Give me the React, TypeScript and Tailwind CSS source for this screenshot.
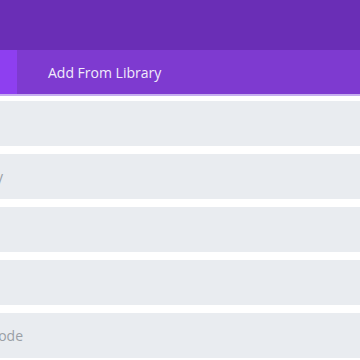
const rows: { label: string; end: number }[] = [
  { label: "", end: 0 },
  { label: "Category", end: 3 },
  { label: "", end: 0 },
  { label: "", end: 0 },
  { label: "Shortcode", end: 23 },
];

export default function App() {
  return (
    <div
      className="w-[360px] h-[360px] overflow-hidden bg-white"
      style={{ fontFamily: '"Open Sans", "Liberation Sans", sans-serif' }}
    >
      <div className="h-[50px] bg-[#6a2eb6]" />
      <div className="flex h-[44px] bg-[#7e3ad0]">
        <div className="w-[17px] bg-[#8e3ff0]" />
        <div className="flex items-center pl-[31px] text-[14px] text-[#f1ecfb]">
          Add From Library
        </div>
      </div>
      <div className="h-[2px] bg-[#c6aef0]" />
      <div className="flex flex-col gap-[8px] pt-[5px]">
        {rows.map((r, i) => (
          <div key={i} className="flex h-[45px] shrink-0 items-center bg-[#e9ecf0]">
            {r.label && (
              <div
                className="flex justify-end whitespace-nowrap text-[14px] text-[#9a9fa6]"
                style={{ width: r.end }}
              >
                {r.label}
              </div>
            )}
          </div>
        ))}
      </div>
    </div>
  );
}
